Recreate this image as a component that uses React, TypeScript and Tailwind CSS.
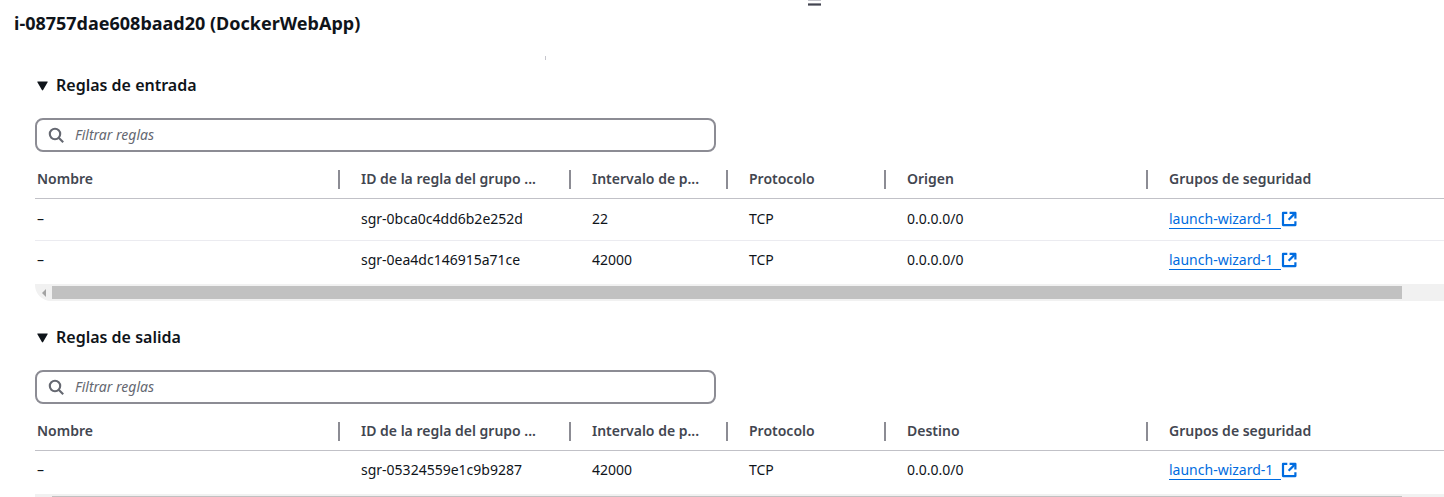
import React, { useState } from "react";

type Rule = { id: string; port: string; protocol: string; peer: string; group: string };

const inbound: Rule[] = [
  { id: "sgr-0bca0c4dd6b2e252d", port: "22", protocol: "TCP", peer: "0.0.0.0/0", group: "launch-wizard-1" },
  { id: "sgr-0ea4dc146915a71ce", port: "42000", protocol: "TCP", peer: "0.0.0.0/0", group: "launch-wizard-1" },
];

const outbound: Rule[] = [
  { id: "sgr-05324559e1c9b9287", port: "42000", protocol: "TCP", peer: "0.0.0.0/0", group: "launch-wizard-1" },
];

function SearchIcon() {
  return (
    <svg viewBox="0 0 16 16" className="size-4 shrink-0 text-[#656871]" fill="none" stroke="currentColor" strokeWidth="2.1" aria-hidden="true">
      <circle cx="7" cy="7" r="5.2" />
      <path d="m10.7 10.7 4.5 4.5" />
    </svg>
  );
}

function ExternalIcon() {
  return (
    <svg viewBox="0 0 16 16" className="size-4 shrink-0" fill="none" stroke="currentColor" strokeWidth="2.2" aria-hidden="true">
      <path d="M6.3 1.9H2v12.2h12.4V10.2" strokeLinejoin="round" />
      <path d="M8.6 1.9h5.8v5.6" strokeLinejoin="round" />
      <path d="M14.2 2.1 7.6 8.7" />
    </svg>
  );
}

function HeaderCell({ label, first, last }: { label: string; first?: boolean; last?: boolean }) {
  return (
    <th scope="col" className="p-0 pb-[9px] text-left align-bottom">
      <div className={`h-[19px] truncate pr-6 text-[14px] leading-[17px] font-semibold text-[#424650] ${first ? "pl-[2px]" : "pl-[21px]"} ${last ? "" : "border-r-2 border-[#8c8c94]"}`}>
        {label}
      </div>
    </th>
  );
}

function ScrollTrack() {
  return (
    <div className="mt-1 flex h-[17px] items-center overflow-hidden rounded-bl-2xl bg-[#f1f1f1]" aria-hidden="true">
      <div className="flex w-[17px] justify-center">
        <svg viewBox="0 0 4 8" className="h-2 w-1 fill-[#a3a3a3]">
          <path d="M4 0v8L0 4z" />
        </svg>
      </div>
      <div className="h-[13px] flex-1 bg-[#c1c1c1]" />
      <div className="w-[42px]" />
    </div>
  );
}

function RulesSection({ name, title, peerLabel, rules }: { name: string; title: string; peerLabel: string; rules: Rule[] }) {
  const [open, setOpen] = useState(true);
  const [query, setQuery] = useState("");
  const shown = rules.filter((r) => Object.values(r).join(" ").includes(query));
  return (
    <section className="pl-[35px]">
      <h2>
        <button type="button" aria-expanded={open} onClick={() => setOpen(!open)} className="flex h-6 items-center gap-2 pl-[2px] text-[16px] leading-6 font-semibold text-[#0f141a]">
          <svg viewBox="0 0 11 12" className={`h-3 w-[11px] fill-current ${open ? "" : "-rotate-90"}`} aria-hidden="true">
            <path d="M.8 2.5h9.4q.9 0 .4.8L6.1 11q-.6.9-1.2 0L.4 3.3Q-.1 2.5.8 2.5z" />
          </svg>
          {title}
        </button>
      </h2>
      {open && (
        <>
          <label htmlFor={name} className="mt-[21px] flex h-[34px] w-[681px] max-w-full items-center gap-[11px] rounded-lg border-2 border-[#8c8c94] pl-[11px]">
            <SearchIcon />
            <input
              id={name}
              type="text"
              aria-label={title}
              placeholder="Filtrar reglas"
              value={query}
              onChange={(e) => setQuery(e.target.value)}
              className="min-w-0 flex-1 text-[14px] leading-5 outline-none placeholder:text-[#656871] placeholder:italic"
            />
          </label>
          <table className="w-full table-fixed border-collapse text-[14px] leading-5 text-[#0f141a]">
            <colgroup>
              <col className="w-[305px]" />
              <col className="w-[231px]" />
              <col className="w-[157px]" />
              <col className="w-[158px]" />
              <col className="w-[262px]" />
              <col />
            </colgroup>
            <thead>
              <tr className="h-[46px] border-b border-[#c1c1c7]">
                <HeaderCell label="Nombre" first />
                <HeaderCell label="ID de la regla del grupo ..." />
                <HeaderCell label="Intervalo de p..." />
                <HeaderCell label="Protocolo" />
                <HeaderCell label={peerLabel} />
                <HeaderCell label="Grupos de seguridad" last />
              </tr>
            </thead>
            <tbody>
              {shown.map((r) => (
                <tr key={r.id} className="h-[42px] border-b border-[#ebebf0] last:h-10 last:border-b-0">
                  <td className="pl-[2px]">–</td>
                  <td className="pl-[21px]">{r.id}</td>
                  <td className="pl-[21px]">{r.port}</td>
                  <td className="pl-[21px]">{r.protocol}</td>
                  <td className="pl-[21px]">{r.peer}</td>
                  <td className="pl-[21px]">
                    <a href="#" className="inline-flex items-center text-[#006ce0]">
                      <span className="border-b border-current pr-2 leading-[19px]">{r.group}</span>
                      <ExternalIcon />
                    </a>
                  </td>
                </tr>
              ))}
            </tbody>
          </table>
          <ScrollTrack />
        </>
      )}
    </section>
  );
}

export default function App() {
  return (
    <main className="h-screen overflow-hidden bg-white font-['Noto_Sans','Open_Sans',sans-serif]">
      <div className="ml-[808px] flex h-[10px] w-[13px] flex-col gap-[2px]" aria-hidden="true">
        <div className="h-px bg-[#c6c6cd]" />
        <div className="h-[3px] border-y border-[#8c8c94] bg-[#424650]" />
      </div>
      <h1 className="pl-[14px] text-[18px] leading-[26px] font-bold text-[#0f141a]">i-08757dae608baad20 (DockerWebApp)</h1>
      <div className="mt-5 ml-[545px] h-1 w-px bg-[#c6c6cd]" />
      <div className="mt-[13px] flex flex-col gap-6">
        <RulesSection name="inbound-filter" title="Reglas de entrada" peerLabel="Origen" rules={inbound} />
        <RulesSection name="outbound-filter" title="Reglas de salida" peerLabel="Destino" rules={outbound} />
      </div>
    </main>
  );
}
